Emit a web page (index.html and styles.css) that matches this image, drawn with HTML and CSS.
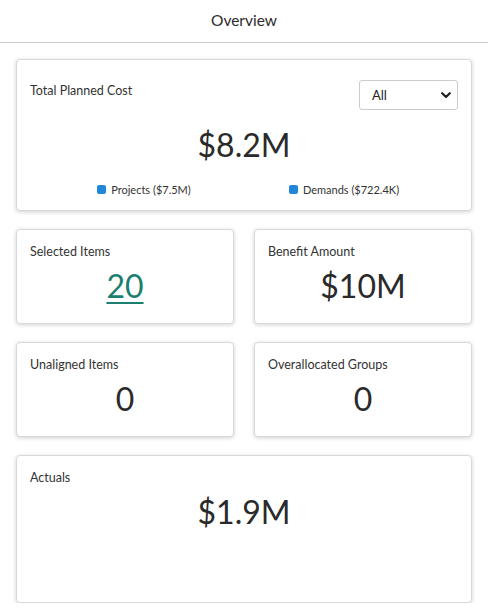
FILE: index.html
```html
<!DOCTYPE html>
<html lang="en">
<head>
    <meta charset="UTF-8">
    <meta name="viewport" content="width=device-width, initial-scale=1.0">
    <title>Overview</title>
    <link rel="stylesheet" href="styles.css">
</head>
<body>
    <header class="topbar">Overview</header>

    <main class="cards">
        <section class="card card-wide card-cost">
            <div class="card-head">
                <span class="card-title">Total Planned Cost</span>
                <div class="select-wrap">
                    <select class="filter">
                        <option>All</option>
                        <option>Projects</option>
                        <option>Demands</option>
                    </select>
                    <svg class="chevron" width="10" height="7" viewBox="0 0 10 7">
                        <path d="M1.2 1.2 L5 5 L8.8 1.2" fill="none" stroke="#222" stroke-width="2.2" stroke-linecap="round" stroke-linejoin="round"/>
                    </svg>
                </div>
            </div>
            <div class="card-value">$8.2M</div>
            <div class="legend">
                <span class="legend-item"><i class="dot"></i>Projects ($7.5M)</span>
                <span class="legend-item"><i class="dot"></i>Demands ($722.4K)</span>
            </div>
        </section>

        <section class="card">
            <span class="card-title">Selected Items</span>
            <div class="card-value"><a href="#" class="value-link">20</a></div>
        </section>

        <section class="card">
            <span class="card-title">Benefit Amount</span>
            <div class="card-value">$10M</div>
        </section>

        <section class="card">
            <span class="card-title">Unaligned Items</span>
            <div class="card-value">0</div>
        </section>

        <section class="card">
            <span class="card-title">Overallocated Groups</span>
            <div class="card-value">0</div>
        </section>

        <section class="card card-wide card-actuals">
            <span class="card-title">Actuals</span>
            <div class="card-value">$1.9M</div>
        </section>
    </main>
</body>
</html>
```

FILE: styles.css
```css
body {
    margin: 0;
    font-family: 'Lato', 'Liberation Sans', sans-serif;
    color: #333333;
    background-color: #ffffff;
}

.topbar {
    height: 42px;
    line-height: 40px;
    text-align: center;
    font-size: 15.5px;
    color: #2b2b2b;
    border-bottom: 1px solid #cfcfcf;
}

.cards {
    display: grid;
    grid-template-columns: 1fr 1fr;
    column-gap: 20px;
    row-gap: 18px;
    padding: 16px 16px 0 16px;
}

.card {
    box-sizing: border-box;
    height: 95px;
    padding: 14px 13px 0 13px;
    background-color: #ffffff;
    border: 1px solid #d9d9d9;
    border-radius: 4px;
    box-shadow: 0 1px 4px rgba(0, 0, 0, 0.18);
    display: flex;
    flex-direction: column;
}

.card-wide {
    grid-column: 1 / 3;
}

.card-cost {
    height: 152px;
    padding-top: 20px;
}

.card-actuals {
    height: 148px;
}

.card-title {
    display: block;
    font-size: 12.5px;
    line-height: 16px;
    color: #333333;
}

.card-head {
    display: flex;
    justify-content: space-between;
    align-items: flex-start;
}

.card-head .card-title {
    margin-top: 3px;
}

.card-value {
    text-align: center;
    font-size: 32px;
    line-height: 40px;
    margin-top: 6px;
    color: #2a2a2a;
}

.card-cost .card-value {
    margin-top: 15px;
}

.value-link {
    color: #1b7f70;
    text-decoration: underline;
    text-decoration-thickness: 2px;
    text-underline-offset: 4px;
}

.select-wrap {
    position: relative;
    margin-right: 0;
}

.filter {
    appearance: none;
    -webkit-appearance: none;
    width: 99px;
    height: 30px;
    padding: 0 0 0 12px;
    font-family: inherit;
    font-size: 13px;
    color: #222222;
    background-color: #ffffff;
    border: 1px solid #cccccc;
    border-radius: 3px;
}

.chevron {
    position: absolute;
    right: 7px;
    top: 12px;
    pointer-events: none;
}

.legend {
    display: flex;
    justify-content: center;
    margin-top: 18px;
}

.legend-item {
    display: flex;
    align-items: center;
    justify-content: center;
    width: 200px;
    font-size: 11px;
    color: #333333;
}

.dot {
    display: inline-block;
    width: 9px;
    height: 9px;
    margin-right: 5px;
    background-color: #2286d9;
    border-radius: 2px;
}
```
